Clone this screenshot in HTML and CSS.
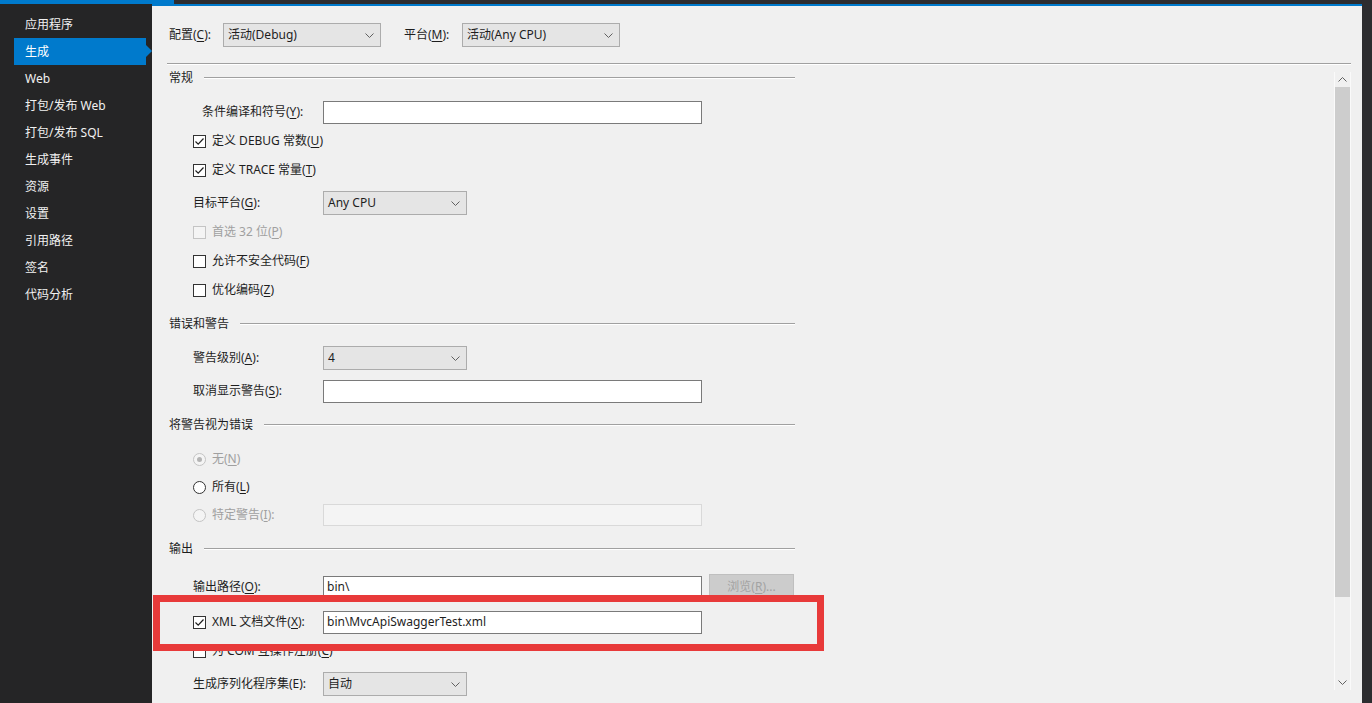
FILE: index.html
```html
<!DOCTYPE html>
<html>
  <head>
    <meta charset="utf-8" />
    <title>项目属性 - 生成</title>
    <link rel="stylesheet" href="styles.css">
  </head>
  <body>
    <div class="titlebar"><div class="doc-tab"></div></div>

    <div class="window">
      <nav class="sidebar">
        <div class="nav-item">应用程序</div>
        <div class="nav-item active">生成</div>
        <div class="nav-item">Web</div>
        <div class="nav-item">打包/发布 Web</div>
        <div class="nav-item">打包/发布 SQL</div>
        <div class="nav-item">生成事件</div>
        <div class="nav-item">资源</div>
        <div class="nav-item">设置</div>
        <div class="nav-item">引用路径</div>
        <div class="nav-item">签名</div>
        <div class="nav-item">代码分析</div>
      </nav>

      <main class="panel">
        <div class="config-bar">
          <span class="config-label">配置(<u>C</u>):</span>
          <div class="select wide">
            <span>活动(Debug)</span>
            <svg class="chev" width="9" height="5" viewBox="0 0 9 5"><path d="M0.5 0.5 L4.5 4.5 L8.5 0.5" /></svg>
          </div>
          <span class="config-label platform">平台(<u>M</u>):</span>
          <div class="select wide">
            <span>活动(Any CPU)</span>
            <svg class="chev" width="9" height="5" viewBox="0 0 9 5"><path d="M0.5 0.5 L4.5 4.5 L8.5 0.5" /></svg>
          </div>
        </div>
        <div class="divider"></div>

        <div class="content">
          <div class="form">
            <!-- 常规 -->
            <div class="group-title">常规</div>
            <div class="row">
              <span class="label indent">条件编译和符号(<u>Y</u>):</span>
              <div class="input"></div>
            </div>
            <div class="row">
              <span class="box checked"><svg width="11" height="11" viewBox="0 0 11 11"><path d="M1.5 5.5 L4.2 8.2 L9.5 2.5" /></svg></span>
              <span>定义 DEBUG 常数(<u>U</u>)</span>
            </div>
            <div class="row">
              <span class="box checked"><svg width="11" height="11" viewBox="0 0 11 11"><path d="M1.5 5.5 L4.2 8.2 L9.5 2.5" /></svg></span>
              <span>定义 TRACE 常量(<u>T</u>)</span>
            </div>
            <div class="row field">
              <span class="label">目标平台(<u>G</u>):</span>
              <div class="select narrow">
                <span>Any CPU</span>
                <svg class="chev" width="9" height="5" viewBox="0 0 9 5"><path d="M0.5 0.5 L4.5 4.5 L8.5 0.5" /></svg>
              </div>
            </div>
            <div class="row disabled">
              <span class="box"></span>
              <span>首选 32 位(<u>P</u>)</span>
            </div>
            <div class="row">
              <span class="box"></span>
              <span>允许不安全代码(<u>F</u>)</span>
            </div>
            <div class="row">
              <span class="box"></span>
              <span>优化编码(<u>Z</u>)</span>
            </div>

            <!-- 错误和警告 -->
            <div class="group-title">错误和警告</div>
            <div class="row">
              <span class="label">警告级别(<u>A</u>):</span>
              <div class="select narrow">
                <span>4</span>
                <svg class="chev" width="9" height="5" viewBox="0 0 9 5"><path d="M0.5 0.5 L4.5 4.5 L8.5 0.5" /></svg>
              </div>
            </div>
            <div class="row field">
              <span class="label">取消显示警告(<u>S</u>):</span>
              <div class="input"></div>
            </div>

            <!-- 将警告视为错误 -->
            <div class="group-title">将警告视为错误</div>
            <div class="row disabled">
              <span class="radio checked"></span>
              <span>无(<u>N</u>)</span>
            </div>
            <div class="row tight">
              <span class="radio"></span>
              <span>所有(<u>L</u>)</span>
            </div>
            <div class="row tight disabled">
              <span class="label"><span class="radio"></span><span>特定警告(<u>I</u>):</span></span>
              <div class="input off"></div>
            </div>

            <!-- 输出 -->
            <div class="group-title">输出</div>
            <div class="row browse-row">
              <span class="label">输出路径(<u>O</u>):</span>
              <div class="input">bin\</div>
              <div class="button">浏览(<u>R</u>)...</div>
            </div>
            <div class="row field">
              <span class="label"><span class="box checked"><svg width="11" height="11" viewBox="0 0 11 11"><path d="M1.5 5.5 L4.2 8.2 L9.5 2.5" /></svg></span><span>XML 文档文件(<u>X</u>):</span></span>
              <div class="input">bin\MvcApiSwaggerTest.xml</div>
            </div>
            <div class="row">
              <span class="box"></span>
              <span>为 COM 互操作注册(<u>C</u>)</span>
            </div>
            <div class="row field">
              <span class="label">生成序列化程序集(E):</span>
              <div class="select narrow">
                <span>自动</span>
                <svg class="chev" width="9" height="5" viewBox="0 0 9 5"><path d="M0.5 0.5 L4.5 4.5 L8.5 0.5" /></svg>
              </div>
            </div>
          </div>

          <div class="scrollbar">
            <div class="scroll-arrow">
              <svg class="chev" width="9" height="5" viewBox="0 0 9 5"><path d="M0.5 4.5 L4.5 0.5 L8.5 4.5" /></svg>
            </div>
            <div class="scroll-thumb"></div>
            <div class="scroll-arrow down">
              <svg class="chev" width="9" height="5" viewBox="0 0 9 5"><path d="M0.5 0.5 L4.5 4.5 L8.5 0.5" /></svg>
            </div>
          </div>
        </div>

        <!-- annotation drawn over the screenshot -->
        <div class="highlight"></div>
      </main>

      <div class="edge"></div>
    </div>
  </body>
</html>
```

FILE: styles.css
```css
* {
  box-sizing: border-box;
}
body {
  margin: 0;
  height: 703px;
  overflow: hidden;
  background: #2d2d30;
  font-family: "Noto Sans", "Noto Sans CJK SC", sans-serif;
  font-size: 12px;
  line-height: 16px;
  color: #1e1e1e;
}
u {
  text-decoration-thickness: 1px;
  text-underline-offset: 2px;
}

/* top strip */
.titlebar {
  height: 4px;
  background: #2d2d30;
}
.doc-tab {
  width: 174px;
  height: 4px;
  background: #007acc;
}
.window {
  display: flex;
  height: 699px;
}

/* left navigation */
.sidebar {
  width: 152px;
  flex: none;
  background: #252526;
  padding-top: 7px;
}
.nav-item {
  position: relative;
  display: flex;
  align-items: center;
  width: 132px;
  height: 27px;
  margin-left: 14px;
  padding-left: 11px;
  color: #f1f1f1;
}
.nav-item.active {
  background: #007acc;
  color: #fff;
}
.nav-item.active::after {
  content: "";
  position: absolute;
  right: -6px;
  top: 7px;
  border-left: 6px solid #007acc;
  border-top: 6.5px solid transparent;
  border-bottom: 6.5px solid transparent;
}

/* property page */
.panel {
  position: relative;
  flex: 1;
  background: #f0f0f0;
  border-top: 2px solid #007acc;
  overflow: hidden;
}
.edge {
  width: 10px;
  flex: none;
  background: #2d2d30;
}
.config-bar {
  display: flex;
  align-items: center;
  height: 24px;
  margin: 17px 0 0 17px;
}
.config-label {
  width: 54px;
  flex: none;
}
.config-label.platform {
  width: 58px;
  margin-left: 23px;
}
.select {
  display: flex;
  align-items: center;
  justify-content: space-between;
  height: 24px;
  padding: 0 6px 0 4px;
  background: #e5e5e5;
  border: 1px solid #acacac;
}
.select.wide {
  width: 158px;
}
.select.narrow {
  width: 144px;
}
.chev path {
  fill: none;
  stroke: #606060;
  stroke-width: 1;
}
.divider {
  margin: 16px 11px 0 15px;
  border-top: 1px solid #a0a0a0;
  border-bottom: 1px solid #fff;
}

.content {
  display: flex;
  justify-content: space-between;
}
.form {
  width: 626px;
  margin-left: 17px;
}
.group-title {
  display: flex;
  align-items: center;
  gap: 11px;
  height: 24px;
  margin-top: 10px;
}
.group-title:first-child {
  margin-top: 1px;
}
.group-title::after {
  content: "";
  flex: 1;
  border-top: 1px solid #a0a0a0;
  border-bottom: 1px solid #fff;
}
.row {
  display: flex;
  align-items: center;
  height: 24px;
  margin-top: 5px;
  padding-left: 24px;
  white-space: nowrap;
}
.group-title + .row {
  margin-top: 10px;
}
.row.field {
  margin-top: 9px;
}
.row.tight {
  margin-top: 4px;
}
.row.browse-row {
  height: 28px;
  margin-top: 12px;
}
.row.disabled {
  color: #a0a0a0;
}
.label {
  display: flex;
  align-items: center;
  width: 130px;
  flex: none;
}
.label.indent {
  padding-left: 9px;
}

.box {
  display: flex;
  align-items: center;
  justify-content: center;
  width: 13px;
  height: 13px;
  margin-right: 6px;
  background: #fff;
  border: 1px solid #333;
  flex: none;
}
.box path {
  fill: none;
  stroke: #1e1e1e;
  stroke-width: 1.2;
}
.disabled .box {
  border-color: #c4c4c4;
  background: #f4f4f4;
}
.radio {
  display: flex;
  align-items: center;
  justify-content: center;
  width: 13px;
  height: 13px;
  margin-right: 6px;
  border-radius: 50%;
  background: #fff;
  border: 1px solid #333;
  flex: none;
}
.disabled .radio {
  border-color: #c4c4c4;
  background: #f4f4f4;
}
.radio.checked::after {
  content: "";
  width: 5px;
  height: 5px;
  border-radius: 50%;
  background: #b4b4b4;
}

.input {
  display: flex;
  align-items: center;
  width: 379px;
  height: 23px;
  padding: 0 3px;
  background: #fff;
  border: 1px solid #7a7a7a;
  color: #1e1e1e;
}
.input.off {
  height: 22px;
  background: #f4f4f4;
  border-color: #d9d9d9;
}
.button {
  display: flex;
  align-items: center;
  justify-content: center;
  width: 85px;
  height: 27px;
  margin-left: 7px;
  background: #cccccc;
  border: 1px solid #bfbfbf;
  color: #a3a3a3;
}

.scrollbar {
  display: flex;
  flex-direction: column;
  width: 17px;
  height: 618px;
  margin: 7px 11px 0 0;
  background: #f0f0f0;
  border-left: 1px solid #fafafa;
  border-right: 1px solid #fafafa;
}
.scroll-arrow {
  display: flex;
  align-items: center;
  justify-content: center;
  height: 15px;
}
.scroll-arrow.down {
  margin-top: auto;
}
.scroll-thumb {
  height: 510px;
  background: #cdcdcd;
}

.highlight {
  position: absolute;
  left: 1px;
  top: 589px;
  width: 671px;
  height: 56px;
  border: 7px solid #e83a3a;
}
```
